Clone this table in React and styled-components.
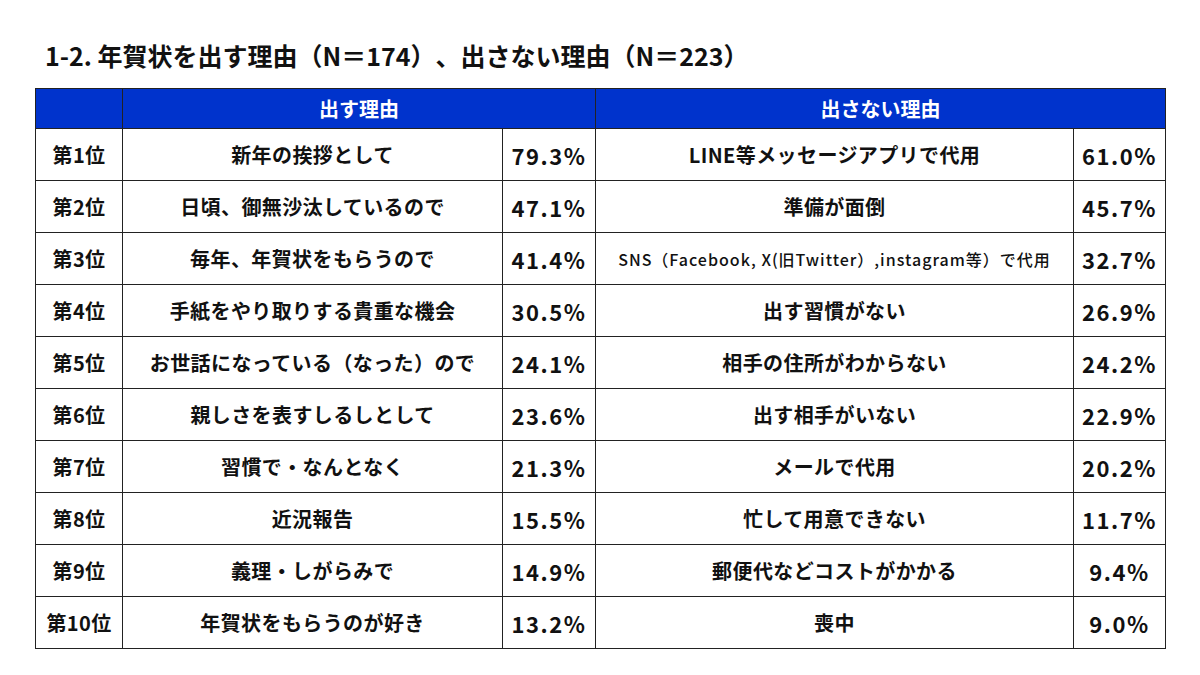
import React from "react";
import styled, { createGlobalStyle } from "styled-components";

const GlobalStyle = createGlobalStyle`
  html, body {
    margin: 0;
    padding: 0;
    background: #fff;
  }
  body {
    font-family: "Noto Sans CJK JP", "Noto Sans", sans-serif;
    color: #111;
    text-spacing-trim: space-all;
  }
`;

const give = [
  ["新年の挨拶として", "79.3%"],
  ["日頃、御無沙汰しているので", "47.1%"],
  ["毎年、年賀状をもらうので", "41.4%"],
  ["手紙をやり取りする貴重な機会", "30.5%"],
  ["お世話になっている（なった）ので", "24.1%"],
  ["親しさを表すしるしとして", "23.6%"],
  ["習慣で・なんとなく", "21.3%"],
  ["近況報告", "15.5%"],
  ["義理・しがらみで", "14.9%"],
  ["年賀状をもらうのが好き", "13.2%"],
];

const notGive = [
  ["LINE等メッセージアプリで代用", "61.0%"],
  ["準備が面倒", "45.7%"],
  ["SNS（Facebook, X(旧Twitter）,instagram等）で代用", "32.7%", true],
  ["出す習慣がない", "26.9%"],
  ["相手の住所がわからない", "24.2%"],
  ["出す相手がいない", "22.9%"],
  ["メールで代用", "20.2%"],
  ["忙して用意できない", "11.7%"],
  ["郵便代などコストがかかる", "9.4%"],
  ["喪中", "9.0%"],
];

const Page = styled.div`
  width: 1200px;
  height: 675px;
  box-sizing: border-box;
  padding: 38px 0 0 35px;
`;

const Title = styled.h1`
  margin: 0 0 16px 10px;
  font-size: 25px;
  font-weight: 700;
  line-height: 34px;
  text-spacing-trim: space-all;
`;

const Table = styled.table`
  border-collapse: collapse;
  table-layout: fixed;
  width: 1130px;
`;

const HeadCell = styled.th`
  background: #0033cc;
  color: #fff;
  height: 39px;
  padding: 0;
  font-size: 20px;
  font-weight: 700;
  border: 1.5px solid #222;
  text-align: center;
`;

const Cell = styled.td`
  height: 51px;
  padding: 0;
  border: 1.5px solid #222;
  text-align: center;
  font-size: ${(p) => (p.$small ? "16px" : "20px")};
  font-weight: ${(p) => (p.$small ? 500 : 700)};
  letter-spacing: ${(p) => (p.$small ? "1px" : "0.4px")};
  white-space: nowrap;
  overflow: hidden;
  text-spacing-trim: space-all;
`;

const Pct = styled(Cell)`
  font-size: 22px;
  font-weight: 600;
  letter-spacing: 1.5px;
`;

export default function App() {
  return (
    <>
      <GlobalStyle />
      <Page>
        <Title>1-2. 年賀状を出す理由（N＝174）、出さない理由（N＝223）</Title>
        <Table>
          <colgroup>
            <col style={{ width: 87 }} />
            <col style={{ width: 380 }} />
            <col style={{ width: 93 }} />
            <col style={{ width: 478 }} />
            <col style={{ width: 92 }} />
          </colgroup>
          <thead>
            <tr>
              <HeadCell />
              <HeadCell colSpan={2}>出す理由</HeadCell>
              <HeadCell colSpan={2}>出さない理由</HeadCell>
            </tr>
          </thead>
          <tbody>
            {give.map((g, i) => {
              const n = notGive[i];
              return (
                <tr key={i}>
                  <Cell>第{i + 1}位</Cell>
                  <Cell>{g[0]}</Cell>
                  <Pct>{g[1]}</Pct>
                  <Cell $small={n[2]}>{n[0]}</Cell>
                  <Pct>{n[1]}</Pct>
                </tr>
              );
            })}
          </tbody>
        </Table>
      </Page>
    </>
  );
}
